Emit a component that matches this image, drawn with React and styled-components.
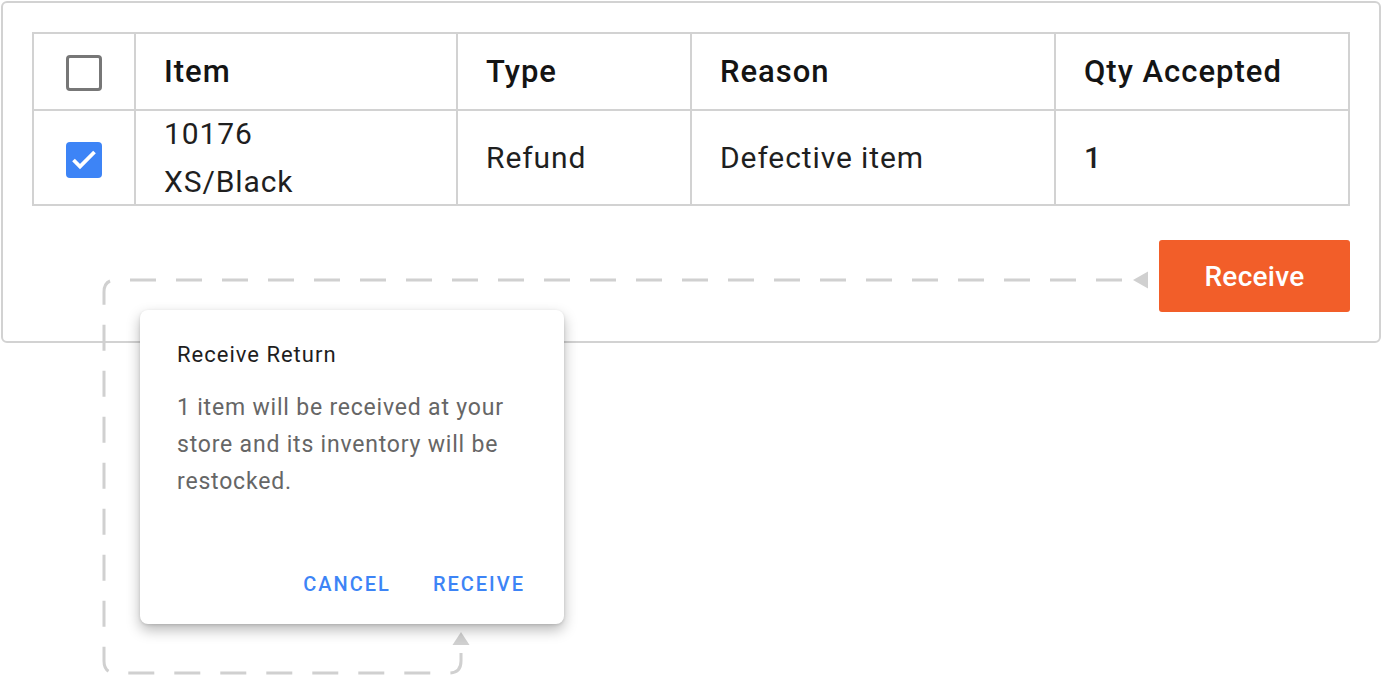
import React from "react";
import styled, { createGlobalStyle } from "styled-components";

const Global = createGlobalStyle`
  html, body { margin: 0; padding: 0; background: #fff; }
  body { font-family: Roboto, "Noto Sans", Arial, sans-serif; }
`;

const Page = styled.div`
  position: relative;
  width: 1382px;
  height: 676px;
  overflow: hidden;
`;

const Card = styled.div`
  margin: 1px;
  width: 1380px;
  box-sizing: border-box;
  border: 2px solid #d2d2d2;
  border-radius: 6px;
  padding: 29px;
  background: #fff;
`;

const Table = styled.table`
  width: 1316px;
  border-collapse: collapse;
  table-layout: fixed;
`;

const HeadRow = styled.tr`
  height: 77px;
`;

const BodyRow = styled.tr`
  height: 95px;
`;

const HeadCell = styled.th`
  border: 2px solid #d2d2d2;
  padding: 0 0 0 ${(p) => (p.$center ? 0 : 28)}px;
  text-align: ${(p) => (p.$center ? "center" : "left")};
  vertical-align: middle;
  font-size: 31px;
  font-weight: 500;
  letter-spacing: 1px;
  color: #141414;
`;

const Cell = styled.td`
  border: 2px solid #d2d2d2;
  padding: 0 0 0 ${(p) => (p.$center ? 0 : 28)}px;
  text-align: ${(p) => (p.$center ? "center" : "left")};
  vertical-align: middle;
  font-size: 30px;
  font-weight: ${(p) => (p.$bold ? 500 : 400)};
  letter-spacing: 0.9px;
  line-height: 40px;
  color: #1f1f1f;
`;

const ItemText = styled.div`
  line-height: 48px;
  margin: -3px 0;
`;

const Box = styled.span`
  display: inline-flex;
  align-items: center;
  justify-content: center;
  width: 36px;
  height: 36px;
  box-sizing: border-box;
  border-radius: 4px;
  vertical-align: middle;
  border: ${(p) => (p.$checked ? "none" : "3px solid #777")};
  background: ${(p) => (p.$checked ? "#3d84f6" : "#fff")};
`;

const Actions = styled.div`
  display: flex;
  justify-content: flex-end;
  margin-top: 34px;
`;

const PrimaryButton = styled.button`
  width: 191px;
  height: 72px;
  border: none;
  border-radius: 3px;
  background: #f25e29;
  color: #fff;
  font-family: Roboto, Arial, sans-serif;
  font-size: 28px;
  font-weight: 500;
  letter-spacing: 0.3px;
  cursor: pointer;
`;

const Connector = styled.svg`
  position: absolute;
  left: 0;
  top: 0;
  z-index: 1;
  pointer-events: none;
`;

const Dialog = styled.div`
  position: absolute;
  left: 140px;
  top: 310px;
  z-index: 2;
  width: 424px;
  height: 314px;
  box-sizing: border-box;
  padding: 30px 37px 22px 37px;
  background: #fff;
  border-radius: 8px;
  box-shadow: 0 6px 14px rgba(0, 0, 0, 0.28), 0 1px 3px rgba(0, 0, 0, 0.12);
  display: flex;
  flex-direction: column;
`;

const DialogTitle = styled.div`
  font-size: 22px;
  line-height: 30px;
  letter-spacing: 1px;
  color: #1e1e1e;
`;

const DialogBody = styled.p`
  margin: 19px 0 0;
  font-size: 23px;
  line-height: 37px;
  letter-spacing: 0.8px;
  color: #666;
`;

const DialogActions = styled.div`
  margin-top: auto;
  display: flex;
  justify-content: flex-end;
  gap: 42px;
  padding-right: 2px;
`;

const TextButton = styled.button`
  border: none;
  background: none;
  padding: 0;
  height: 36px;
  font-family: Roboto, Arial, sans-serif;
  font-size: 20px;
  font-weight: 500;
  letter-spacing: 2px;
  color: #3d84f6;
  cursor: pointer;
`;

const Check = ({ checked }) => (
  <Box $checked={checked}>
    {checked && (
      <svg width="36" height="36" viewBox="0 0 36 36">
        <path d="M7.5 18 L14 24.5 L28.5 10" fill="none" stroke="#fff" strokeWidth="3.8" />
      </svg>
    )}
  </Box>
);

export default function App() {
  return (
    <Page>
      <Global />
      <Card>
        <Table>
          <colgroup>
            <col style={{ width: 102 }} />
            <col style={{ width: 322 }} />
            <col style={{ width: 234 }} />
            <col style={{ width: 364 }} />
            <col style={{ width: 294 }} />
          </colgroup>
          <thead>
            <HeadRow>
              <HeadCell $center><Check /></HeadCell>
              <HeadCell>Item</HeadCell>
              <HeadCell>Type</HeadCell>
              <HeadCell>Reason</HeadCell>
              <HeadCell>Qty Accepted</HeadCell>
            </HeadRow>
          </thead>
          <tbody>
            <BodyRow>
              <Cell $center><Check checked /></Cell>
              <Cell><ItemText>10176<br />XS/Black</ItemText></Cell>
              <Cell>Refund</Cell>
              <Cell>Defective item</Cell>
              <Cell $bold>1</Cell>
            </BodyRow>
          </tbody>
        </Table>
        <Actions>
          <PrimaryButton>Receive</PrimaryButton>
        </Actions>
      </Card>

      <Connector width="1382" height="676" viewBox="0 0 1382 676">
        <path
          d="M1122 280 H116 Q104 280 104 292 V661 Q104 673 116 673 H449 Q461 673 461 661 V648"
          fill="none"
          stroke="#d0d0d0"
          strokeWidth="3"
          strokeDasharray="26 20"
        />
        <polygon points="1133,280 1148,271.5 1148,288.5" fill="#d0d0d0" />
        <polygon points="461,632 452.5,645 469.5,645" fill="#d0d0d0" />
      </Connector>

      <Dialog>
        <DialogTitle>Receive Return</DialogTitle>
        <DialogBody>1 item will be received at your store and its inventory will be restocked.</DialogBody>
        <DialogActions>
          <TextButton>CANCEL</TextButton>
          <TextButton>RECEIVE</TextButton>
        </DialogActions>
      </Dialog>
    </Page>
  );
}
